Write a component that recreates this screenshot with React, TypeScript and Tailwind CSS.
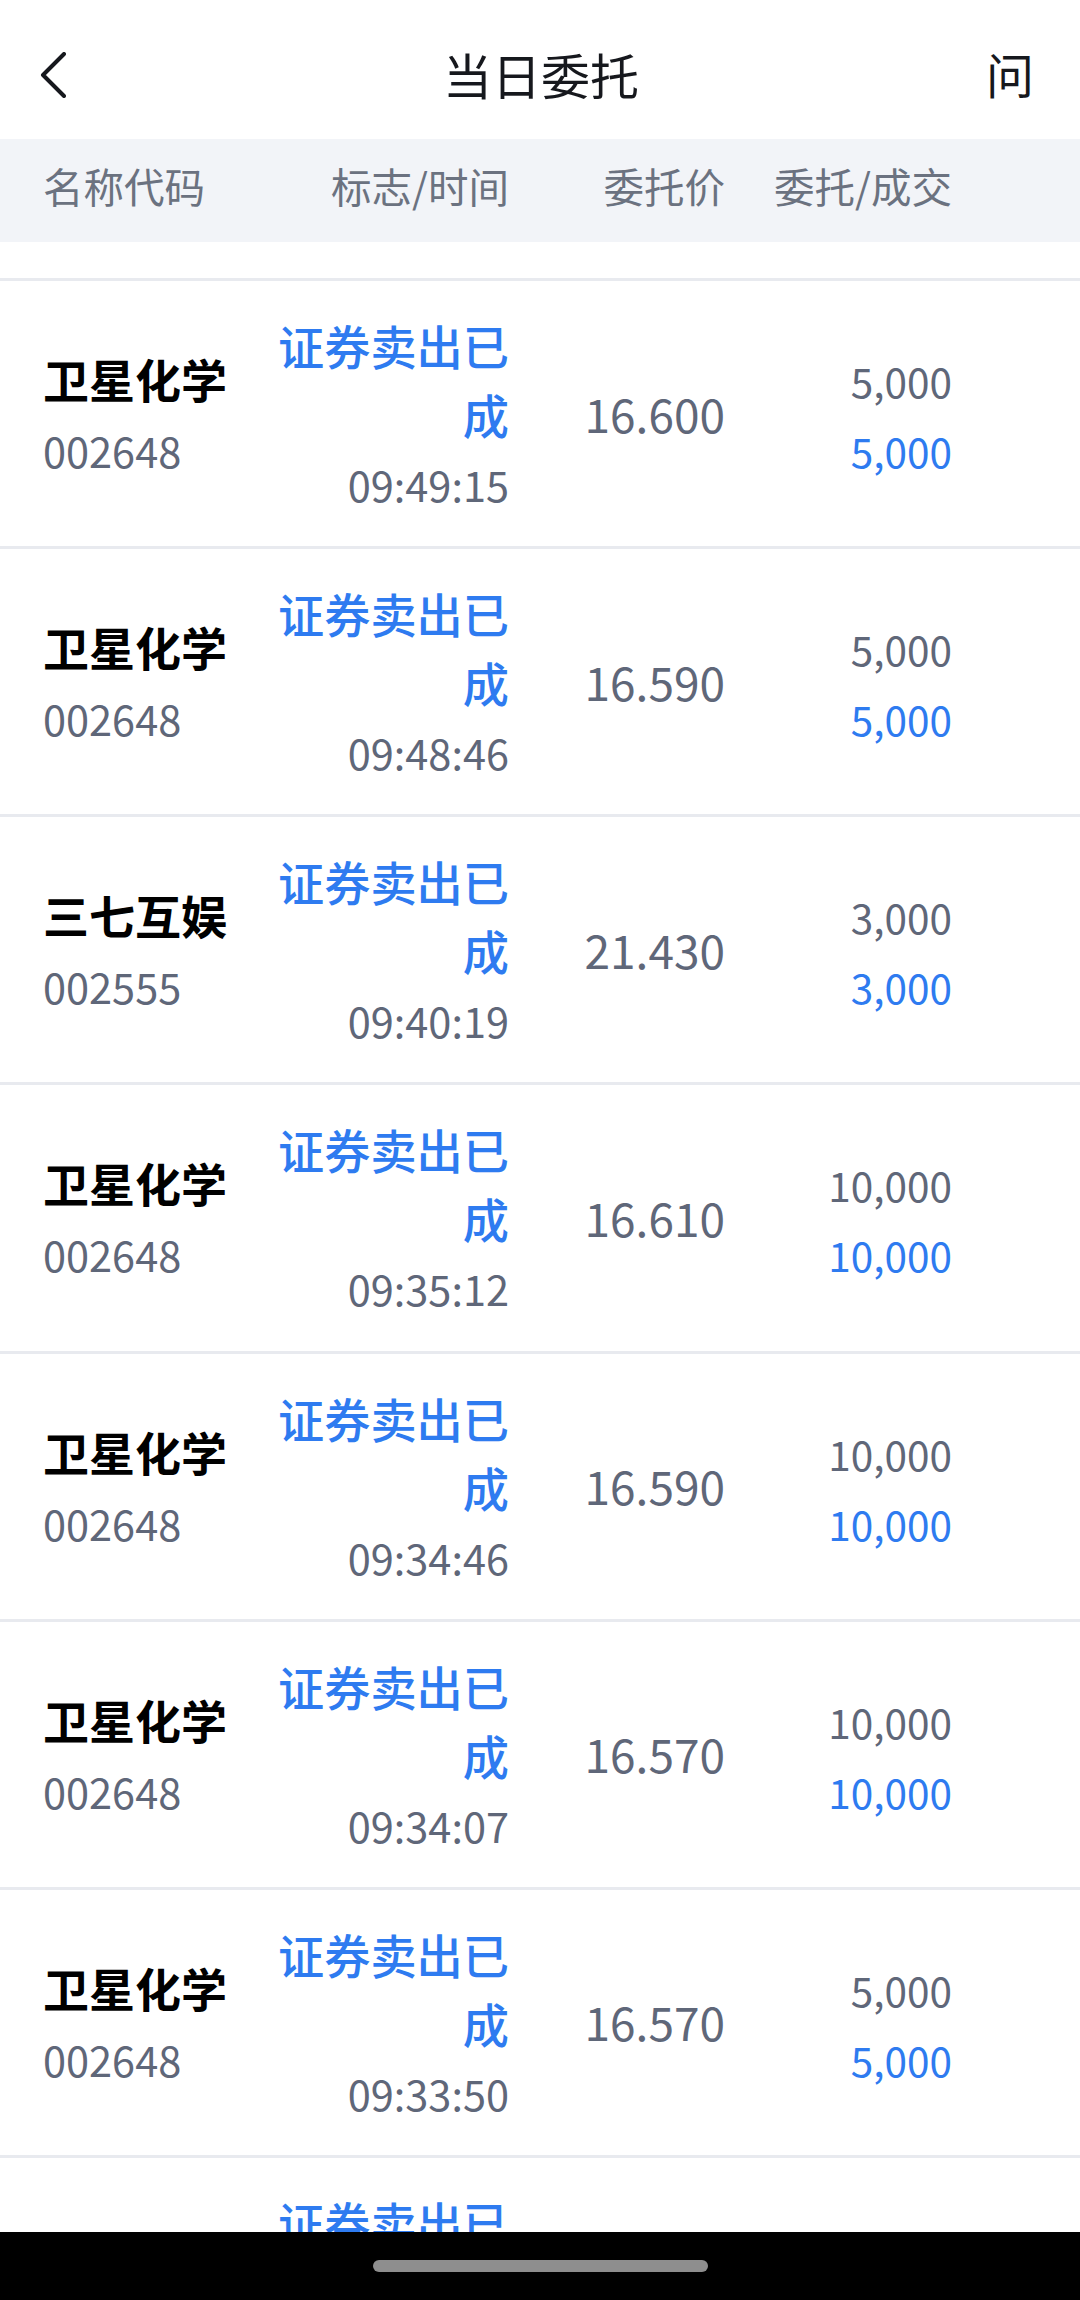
// App.tsx
import React from "react";

const font = "font-['Noto_Sans_CJK_SC','Noto_Sans',sans-serif]";

const rows = [
  { name: "卫星化学", code: "002648", time: "09:49:15", price: "16.600", qty: "5,000" },
  { name: "卫星化学", code: "002648", time: "09:48:46", price: "16.590", qty: "5,000" },
  { name: "三七互娱", code: "002555", time: "09:40:19", price: "21.430", qty: "3,000" },
  { name: "卫星化学", code: "002648", time: "09:35:12", price: "16.610", qty: "10,000" },
  { name: "卫星化学", code: "002648", time: "09:34:46", price: "16.590", qty: "10,000" },
  { name: "卫星化学", code: "002648", time: "09:34:07", price: "16.570", qty: "10,000" },
  { name: "卫星化学", code: "002648", time: "09:33:50", price: "16.570", qty: "5,000" },
];

function Row(props: { name: string; code: string; time: string; price: string; qty: string }) {
  return (
    <div className="flex h-[268.14px] shrink-0 items-center border-t-[3px] border-[#e8eaef] pt-[2px] pl-[43px]">
      <div className="w-[233px] shrink-0">
        <div className="text-[46px] leading-[69px] font-bold text-black">{props.name}</div>
        <div className="mt-[3px] text-[41.5px] leading-[69px] text-[#5f6779]">{props.code}</div>
      </div>
      <div className="w-[233px] shrink-0 text-right">
        <div className="text-[46.2px] leading-[69px] font-medium text-[#2e7bf0]">证券卖出已成</div>
        <div className="mt-[2px] text-[41.5px] leading-[69px] text-[#5f6779]">{props.time}</div>
      </div>
      <div className="w-[216px] shrink-0 pb-[3px] text-right text-[46px] leading-[69px] text-[#5f6779]">{props.price}</div>
      <div className="w-[227px] shrink-0 pt-[2px] text-right text-[40.5px] leading-[69px]">
        <div className="text-[#5f6779]">{props.qty}</div>
        <div className="mt-[1px] text-[#2e7bf0]">{props.qty}</div>
      </div>
    </div>
  );
}

export default function App() {
  return (
    <div className={`flex h-[2300px] w-[1080px] flex-col overflow-hidden bg-white ${font}`}>
      {/* top bar */}
      <div className="flex h-[139px] shrink-0 items-center justify-between pt-[11px] pr-[46px] pl-[40px]">
        <svg width="26" height="46" viewBox="0 0 26 46" fill="none" className="shrink-0">
          <path d="M24 2 L3 23 L24 44" stroke="#16181d" strokeWidth="4" strokeLinecap="round" strokeLinejoin="round" />
        </svg>
        <div className="pb-[3px] pl-[30px] text-[49px] leading-[72px] text-[#16181d]">当日委托</div>
        <div className="pb-[4px] text-[48px] leading-[72px] text-[#16181d]">问</div>
      </div>

      {/* table head */}
      <div className="flex h-[103px] shrink-0 items-center bg-[#f2f4f8] pb-[10px] pl-[43px] text-[40.5px] leading-[60px] text-[#6b7280]">
        <div className="w-[233px] shrink-0">名称代码</div>
        <div className="w-[233px] shrink-0 text-right">标志/时间</div>
        <div className="w-[216px] shrink-0 text-right">委托价</div>
        <div className="w-[227px] shrink-0 text-right">委托/成交</div>
      </div>

      {/* list */}
      <div className="flex min-h-0 flex-1 flex-col overflow-hidden pt-[36px]">
        {rows.map((r) => (
          <Row key={r.time} {...r} />
        ))}
        <Row name="卫星化学" code="002648" time="09:33:12" price="16.570" qty="5,000" />
      </div>

      {/* gesture bar */}
      <div className="flex h-[68px] shrink-0 items-center justify-center bg-black">
        <div className="h-[12px] w-[335px] rounded-full bg-[#8e8e8e]" />
      </div>
    </div>
  );
}
